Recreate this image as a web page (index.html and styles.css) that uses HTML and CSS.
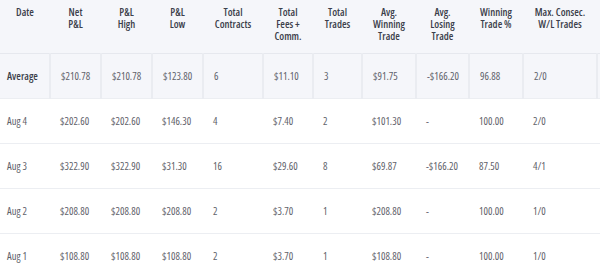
FILE: index.html
```html
<!DOCTYPE html>
<html lang="en">
<head>
  <meta charset="UTF-8" />
  <title>Daily Stats</title>
  <link rel="stylesheet" href="styles.css">
</head>
<body>
  <table class="stats">
    <colgroup>
      <col style="width: 50px">
      <col style="width: 51px">
      <col style="width: 51px">
      <col style="width: 51px">
      <col style="width: 60px">
      <col style="width: 50px">
      <col style="width: 49px">
      <col style="width: 54px">
      <col style="width: 53px">
      <col style="width: 54px">
      <col style="width: 74px">
      <col style="width: 60px">
    </colgroup>
    <thead>
      <tr>
        <th>Date</th>
        <th>Net<br>P&amp;L</th>
        <th>P&amp;L<br>High</th>
        <th>P&amp;L<br>Low</th>
        <th>Total<br>Contracts</th>
        <th>Total<br>Fees +<br>Comm.</th>
        <th>Total<br>Trades</th>
        <th>Avg.<br>Winning<br>Trade</th>
        <th>Avg.<br>Losing<br>Trade</th>
        <th>Winning<br>Trade %</th>
        <th>Max. Consec.<br>W/L Trades</th>
        <th></th>
      </tr>
    </thead>
    <tbody>
      <tr class="avg-row">
        <td class="label">Average</td>
        <td>$210.78</td><td>$210.78</td><td>$123.80</td><td>6</td><td>$11.10</td>
        <td>3</td><td>$91.75</td><td>-$166.20</td><td>96.88</td><td>2/0</td><td></td>
      </tr>
      <tr>
        <td class="label">Aug 4</td>
        <td>$202.60</td><td>$202.60</td><td>$146.30</td><td>4</td><td>$7.40</td>
        <td>2</td><td>$101.30</td><td>-</td><td>100.00</td><td>2/0</td><td></td>
      </tr>
      <tr>
        <td class="label">Aug 3</td>
        <td>$322.90</td><td>$322.90</td><td>$31.30</td><td>16</td><td>$29.60</td>
        <td>8</td><td>$69.87</td><td>-$166.20</td><td>87.50</td><td>4/1</td><td></td>
      </tr>
      <tr>
        <td class="label">Aug 2</td>
        <td>$208.80</td><td>$208.80</td><td>$208.80</td><td>2</td><td>$3.70</td>
        <td>1</td><td>$208.80</td><td>-</td><td>100.00</td><td>1/0</td><td></td>
      </tr>
      <tr>
        <td class="label">Aug 1</td>
        <td>$108.80</td><td>$108.80</td><td>$108.80</td><td>2</td><td>$3.70</td>
        <td>1</td><td>$108.80</td><td>-</td><td>100.00</td><td>1/0</td><td></td>
      </tr>
    </tbody>
  </table>
</body>
</html>
```

FILE: styles.css
```css
* { margin: 0; padding: 0; box-sizing: border-box; }

html, body {
  height: 100%;
  overflow: hidden;
  background: #fff;
  font-family: "Open Sans", sans-serif;
  font-stretch: 82%;
}

.stats {
  table-layout: fixed;
  width: 657px;
  border-collapse: collapse;
  font-size: 10.5px;
  color: #5f626a;
}

/* Header */
.stats thead tr {
  height: 53px;
  background: #f5f6fa;
}

.stats th {
  vertical-align: top;
  padding-top: 6px;
  font-weight: 600;
  line-height: 12px;
  color: #3c3f4b;
  text-align: center;
  border-bottom: 1px solid #e6e8ee;
}

/* Body rows */
.stats tbody tr {
  height: 45px;
  border-bottom: 1px solid #eceef2;
}

.stats td {
  padding-left: 10px;
  white-space: nowrap;
  vertical-align: middle;
}

.stats td.label {
  padding-left: 7px;
}

.avg-row {
  background: #f5f6fa;
}

.avg-row td {
  border-right: 2px solid #eaecf1;
}

.avg-row td.label {
  font-weight: 600;
  color: #3c3f4b;
}

.stats tbody tr:last-child {
  border-bottom: none;
}
```
